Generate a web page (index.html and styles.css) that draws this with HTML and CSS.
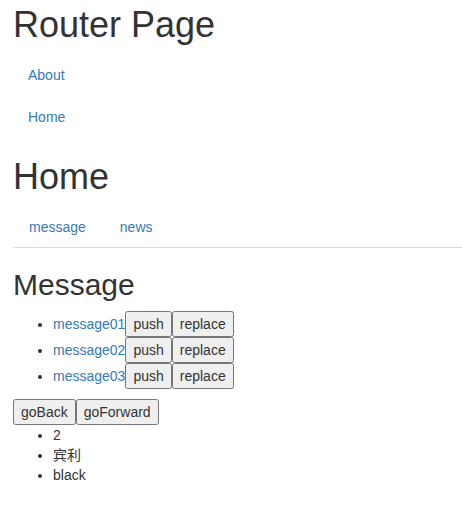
FILE: index.html
```html
<!DOCTYPE html>
<html lang="zh">
<head>
<meta charset="utf-8">
<title>Router Page</title>
<link rel="stylesheet" href="styles.css">
</head>
<body>
<div class="page">
  <h1 class="title">Router Page</h1>
  <ul class="pills">
    <li><a class="link" href="#about">About</a></li>
    <li><a class="link" href="#home">Home</a></li>
  </ul>
  <h1 class="heading">Home</h1>
  <ul class="tabs">
    <li><a class="tab" href="#message">message</a></li>
    <li><a class="tab" href="#news">news</a></li>
  </ul>
  <h2 class="subheading">Message</h2>
  <ul class="list">
    <li><a class="msg" href="#m1">message01</a><button class="btn">push</button><button class="btn">replace</button></li>
    <li><a class="msg" href="#m2">message02</a><button class="btn">push</button><button class="btn">replace</button></li>
    <li><a class="msg" href="#m3">message03</a><button class="btn">push</button><button class="btn">replace</button></li>
  </ul>
  <div class="history"><button class="btn">goBack</button><button class="btn">goForward</button></div>
  <ul class="detail">
    <li>2</li>
    <li>宾利</li>
    <li>black</li>
  </ul>
</div>
</body>
</html>
```

FILE: styles.css
```css
html, body {
  margin: 0;
  padding: 0;
  background: #fff;
}
body {
  font-family: "Liberation Sans", Arial, "Noto Sans CJK SC", sans-serif;
  font-size: 14px;
  line-height: 20px;
  color: #333;
}
.page {
  padding-left: 13px;
}
.title, .heading {
  font-size: 36px;
  font-weight: 500;
  line-height: 1.1;
  margin: 20px 0 10px;
}
.title {
  margin-top: 5px;
}
.subheading {
  font-size: 30px;
  font-weight: 500;
  line-height: 1.1;
  margin: 20px 0 10px;
}
.pills {
  list-style: none;
  margin: 0;
  padding: 0;
}
.pills li + li {
  margin-top: 2px;
}
.link {
  display: block;
  padding: 10px 15px;
  color: #337ab7;
  text-decoration: none;
}
.tabs {
  list-style: none;
  margin: 0;
  padding: 0;
  display: flex;
  border-bottom: 1px solid #ddd;
}
.tabs li {
  margin-bottom: -1px;
}
.tab {
  display: block;
  padding: 10px 15px;
  margin-right: 2px;
  border: 1px solid transparent;
  border-radius: 4px 4px 0 0;
  color: #337ab7;
  text-decoration: none;
}
.list {
  margin: 0 0 10px;
  padding-left: 40px;
}
.msg {
  color: #337ab7;
  text-decoration: none;
}
.btn {
  font: inherit;
  line-height: 20px;
  color: inherit;
  margin: 0;
}
.detail {
  margin: 0 0 10px;
  padding-left: 40px;
}
```
